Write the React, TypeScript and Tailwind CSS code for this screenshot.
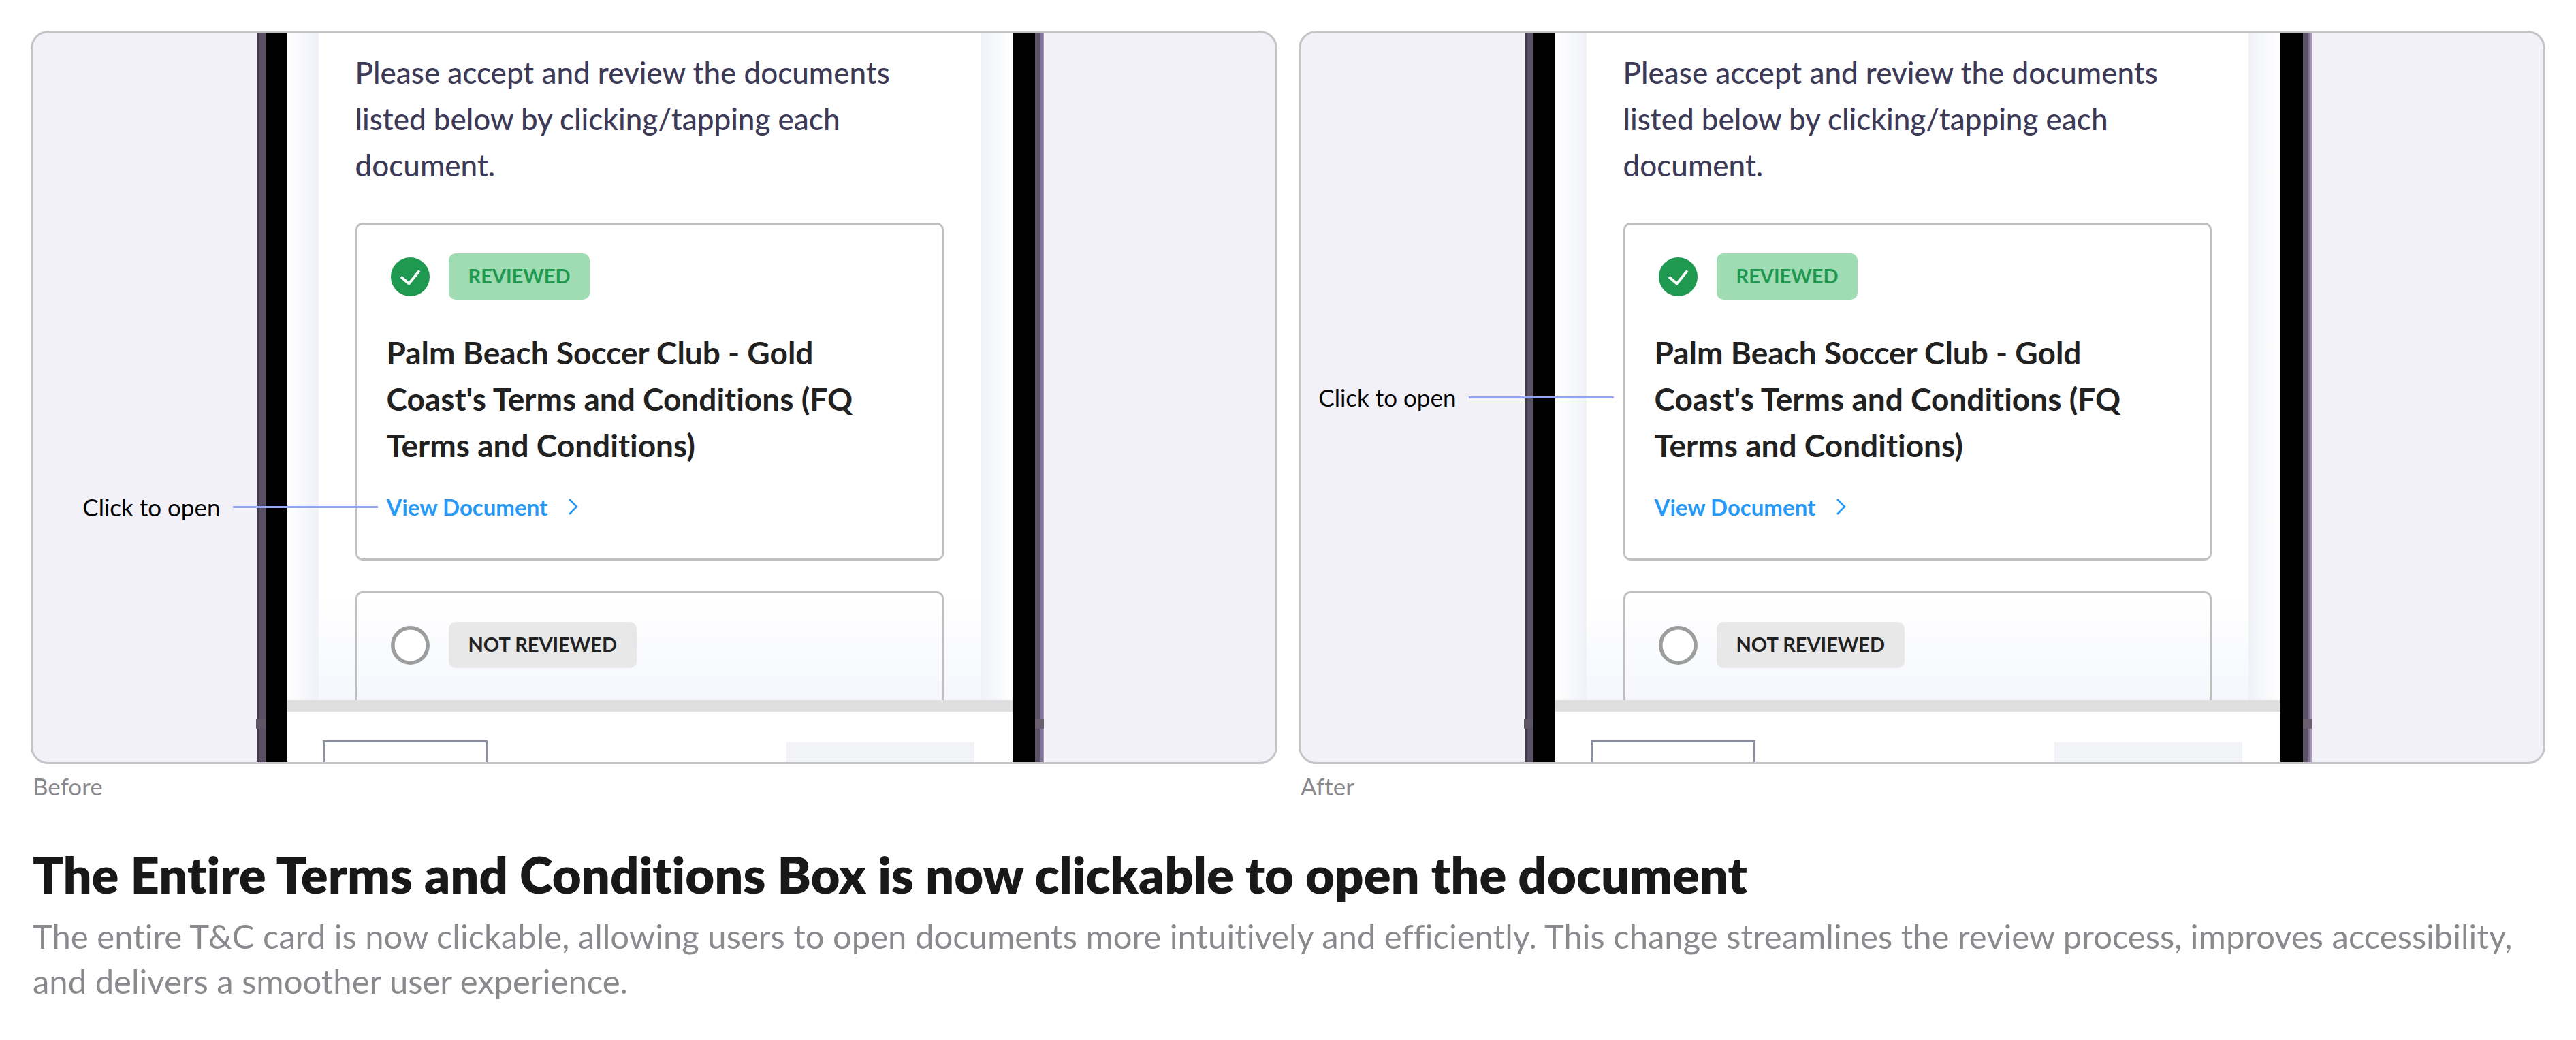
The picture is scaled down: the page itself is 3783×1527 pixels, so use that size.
import React from 'react';

type Variant = 'before' | 'after';

const Callout = () => (
  <span className="flex items-center gap-[18px] whitespace-nowrap text-[35px] leading-[48px] font-normal text-black">
    Click to open
    <span className="h-[3px] w-[213px] bg-[#93a5fb]"></span>
  </span>
);

const CheckIcon = () => (
  <svg className="size-[57px] shrink-0" viewBox="0 0 57 57" fill="none">
    <circle cx="28.5" cy="28.5" r="28.5" fill="#1f9850" />
    <path d="M15 28.5 L26.5 38.5 L42 19.5" stroke="#fff" strokeWidth="3.8" />
  </svg>
);

const EmptyIcon = () => (
  <svg className="size-[57px] shrink-0" viewBox="0 0 57 57" fill="none">
    <circle cx="28.5" cy="28.5" r="25.7" fill="#fff" stroke="#9c9d9d" strokeWidth="5.5" />
  </svg>
);

const ChevronIcon = () => (
  <svg className="h-[26px] w-4" viewBox="0 0 16 26" fill="none">
    <path d="M2 2 L13 13 L2 24" stroke="#2699f7" strokeWidth="2.6" />
  </svg>
);

const LeftEdge = () => (
  <div className="relative flex shrink-0">
    <div className="w-1 bg-[#403a4c]"></div>
    <div className="w-[9px] bg-[#5a5063]"></div>
    <div className="w-8 bg-black"></div>
    <div className="absolute bottom-[49px] left-[-1px] h-[14px] w-[14px] bg-[#5f5665]"></div>
  </div>
);

const RightEdge = () => (
  <div className="relative flex shrink-0">
    <div className="w-[33px] bg-black"></div>
    <div className="w-[7px] bg-[#5b5264]"></div>
    <div className="w-1 bg-[#81749a]"></div>
    <div className="w-[2px] bg-[#a799b6]"></div>
    <div className="absolute right-0 bottom-[49px] h-[14px] w-[13px] bg-[#6b5f70]"></div>
  </div>
);

const DocumentCard = ({ variant }: { variant: Variant }) => (
  <div className="relative rounded-[10px] border-3 border-[#bfbfbf] px-[43px] pt-[42px] pb-[52px]">
    <div className="flex items-center gap-7 pl-1.5">
      <CheckIcon />
      <span className="rounded-[10px] bg-[#9fdcb3] px-[29px] pt-[11px] pb-[13px] text-[29px] leading-[44px] font-bold text-[#1f9850]">
        REVIEWED
      </span>
    </div>
    <h3 className="mt-11 text-[46px] leading-[68px] font-bold text-[#212121]">
      Palm Beach Soccer Club - Gold
      <br />
      Coast's Terms and Conditions (FQ
      <br />
      Terms and Conditions)
    </h3>
    <div className="relative mt-8 flex">
      <a href="#document" className="flex items-center gap-[30px] text-[33px] leading-[48px] font-bold text-[#2699f7]">
        View Document
        <ChevronIcon />
      </a>
      {variant === 'before' && (
        <div className="absolute top-0 right-full mr-[13px]">
          <Callout />
        </div>
      )}
    </div>
    {variant === 'after' && (
      <div className="absolute top-[229px] right-full mr-[17px]">
        <Callout />
      </div>
    )}
  </div>
);

const PhoneScreen = ({ variant }: { variant: Variant }) => (
  <div className="ml-[18%] flex w-[1156px]">
    <LeftEdge />
    <div className="flex-1 bg-white">
      <div className="flex">
        <div className="w-[46px] shrink-0 bg-linear-to-r from-white to-[#f0f2f8]"></div>
        <div className="flex-1 bg-linear-to-b from-white from-85% to-[#f5f7fd] px-[54px] pt-6">
          <p className="text-[44px] leading-[68px] font-medium text-[#3d3a57]">
            Please accept and review the documents
            <br />
            listed below by clicking/tapping each
            <br />
            document.
          </p>
          <div className="mt-[51px]">
            <DocumentCard variant={variant} />
          </div>
          <div className="mt-[45px] rounded-t-[10px] border-3 border-b-0 border-[#bfbfbf] px-[43px] pt-[42px] pb-[47px]">
            <div className="flex items-center gap-7 pl-1.5">
              <EmptyIcon />
              <span className="rounded-[10px] bg-[#e8e8e9] px-[29px] pt-[11px] pb-[13px] text-[29px] leading-[44px] font-bold text-[#212121]">
                NOT REVIEWED
              </span>
            </div>
          </div>
        </div>
        <div className="w-[47px] shrink-0 bg-linear-to-r from-[#f0f2f8] to-white"></div>
      </div>
      {/* sticky footer with the tops of its two buttons */}
      <div className="flex items-end justify-between border-t-[17px] border-[#dfdfdf] pt-[42px] pr-[56px] pl-[52px]">
        <div className="h-8 w-[242px] border-3 border-b-0 border-[#8a90a0]"></div>
        <div className="h-[29px] w-[276px] bg-[#f2f3f6]"></div>
      </div>
    </div>
    <RightEdge />
  </div>
);

const Panel = ({ variant, label }: { variant: Variant; label: string }) => (
  <figure className="min-w-0 flex-1">
    <div className="overflow-hidden rounded-[26px] border-3 border-[#c5c5c8] bg-[#f2f1f7]">
      <PhoneScreen variant={variant} />
    </div>
    <figcaption className="mt-2 pl-[3px] text-[35px] leading-[48px] text-[#8a8a8e]">{label}</figcaption>
  </figure>
);

const App = () => {
  return (
    <main className="min-h-screen bg-white px-[45px] pt-[45px] pb-12 font-['Lato',sans-serif] [font-variant-ligatures:none]">
      <div className="flex gap-[31px]">
        <Panel variant="before" label="Before" />
        <Panel variant="after" label="After" />
      </div>
      <section className="mt-[62px] pl-[3px]">
        <h1 className="text-[74px] leading-[88px] font-extrabold text-[#181818]">
          The Entire Terms and Conditions Box is now clickable to open the document
        </h1>
        <p className="mt-[13px] text-[49px] leading-[66px] text-[#8a8a8e]">
          The entire T&amp;C card is now clickable, allowing users to open documents more intuitively and efficiently. This change streamlines the review process, improves accessibility,
          <br />
          and delivers a smoother user experience.
        </p>
      </section>
    </main>
  );
};

export default App;
